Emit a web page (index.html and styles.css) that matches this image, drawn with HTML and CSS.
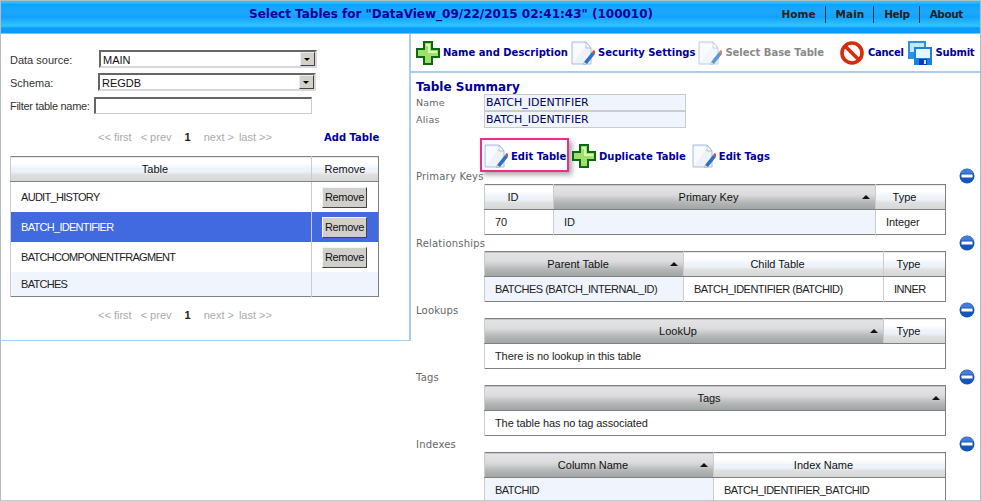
FILE: index.html
```html
<!DOCTYPE html>
<html lang="en">
<head>
  <meta charset="UTF-8" />
  <title>Select Tables</title>
  <link rel="stylesheet" href="styles.css">
</head>
<body>
  <svg class="defs" width="0" height="0">
    <symbol id="ico-plus" viewBox="0 0 24 24">
      <path d="M8 1h8v7h7v8h-7v7H8v-7H1V8h7z" fill="#9fe06c" stroke="#0b6a10" stroke-width="2"/>
      <path d="M10 3h4v7h7v2H12V5h-2z" fill="#dcf7bc"/>
    </symbol>
    <symbol id="ico-page" viewBox="0 0 24 24">
      <path d="M1 1h14l5 6v16H1z" fill="#eef3fb" stroke="#a9bedd"/>
      <path d="M15 1v6h5z" fill="#fff" stroke="#a9bedd"/>
      <path d="M2 22L16 3v0L2 3z" fill="#fff" opacity=".6"/>
      <path d="M13 21l8-10 3 2-8 10-4 1z" fill="#2b73c8"/>
      <path d="M21 11l1.500-2 3 2-2 2z" fill="#e8452c"/>
      <path d="M13 21l3 2-4 1z" fill="#f3d9a8"/>
    </symbol>
    <symbol id="ico-cancel" viewBox="0 0 24 24">
      <circle cx="12" cy="12" r="10" fill="#fff" stroke="#d92a0c" stroke-width="3.600"/>
      <path d="M5 5l14 14" stroke="#d92a0c" stroke-width="3.600"/>
    </symbol>
    <symbol id="ico-save" viewBox="0 0 24 24">
      <path d="M0 0h18v18H0z" fill="#2f8fe0"/>
      <path d="M2 2h14v9H2z" fill="#bfe8fb"/>
      <path d="M6 6h18v18H6z" fill="#1f7fdc"/>
      <path d="M8 8h14v9H8z" fill="#e4f6fd"/>
      <path d="M11 18h8v6h-8z" fill="#0b3fb5"/>
      <path d="M16 19h2v4h-2z" fill="#cfe9fb"/>
    </symbol>
    <symbol id="ico-minus" viewBox="0 0 16 16">
      <circle cx="8" cy="8" r="7.500" fill="#1556b8"/>
      <path d="M1.500 5.500a7 7 0 0 1 13 0z" fill="#5b8fe0" opacity=".7"/>
      <path d="M2.500 6.500h11v3h-11z" fill="#fff"/>
    </symbol>
  </svg>

  <div class="page">
    <header class="topbar">
      <div class="topbar-title">Select Tables for "DataView_09/22/2015 02:41:43" (100010)</div>
      <nav class="topnav">
        <a>Home</a>
        <a>Main</a>
        <a class="tight">Help</a>
        <a class="tight">About</a>
      </nav>
    </header>

    <div class="columns">
      <aside class="left">
        <div class="left-inner">
          <div class="field">
            <label class="field-label">Data source:</label>
            <div class="select select-source"><span>MAIN</span><i class="arrow"></i></div>
          </div>
          <div class="field field-next">
            <label class="field-label">Schema:</label>
            <div class="select select-schema"><span>REGDB</span><i class="arrow"></i></div>
          </div>
          <div class="field field-next">
            <label class="field-label-auto">Filter table name:</label>
            <div class="filter-input"></div>
          </div>
          <div class="pager-row">
            <div class="pager"><span>&lt;&lt; first</span><span>&lt; prev</span><b>1</b><span class="next">next &gt;</span><span>last &gt;&gt;</span></div>
            <a class="add-table">Add Table</a>
          </div>
          <table class="grid grid-left">
            <colgroup><col class="c-table"><col></colgroup>
            <tr><th class="light">Table</th><th class="light flush">Remove</th></tr>
            <tr class="tall"><td class="pad">AUDIT_HISTORY</td><td class="mid"><button class="btn">Remove</button></td></tr>
            <tr class="tall selected"><td class="pad">BATCH_IDENTIFIER</td><td class="mid"><button class="btn">Remove</button></td></tr>
            <tr class="tall"><td class="pad">BATCHCOMPONENTFRAGMENT</td><td class="mid"><button class="btn">Remove</button></td></tr>
            <tr class="alt"><td class="pad">BATCHES</td><td></td></tr>
          </table>
          <div class="pager pager-bottom"><span>&lt;&lt; first</span><span>&lt; prev</span><b>1</b><span class="next">next &gt;</span><span>last &gt;&gt;</span></div>
        </div>
      </aside>

      <main class="right">
        <div class="toolbar">
          <a class="tool t-name"><svg class="ico"><use href="#ico-plus"/></svg>Name and Description</a>
          <a class="tool t-sec"><svg class="ico"><use href="#ico-page"/></svg>Security Settings</a>
          <a class="tool t-base off"><svg class="ico"><use href="#ico-page"/></svg>Select Base Table</a>
          <a class="tool t-cancel"><svg class="ico"><use href="#ico-cancel"/></svg>Cancel</a>
          <a class="tool t-submit"><svg class="ico"><use href="#ico-save"/></svg>Submit</a>
        </div>
        <div class="summary">
          <h2 class="summary-title">Table Summary</h2>
          <div class="kv"><span class="kv-label">Name</span><span class="kv-value">BATCH_IDENTIFIER</span></div>
          <div class="kv"><span class="kv-label">Alias</span><span class="kv-value">BATCH_IDENTIFIER</span></div>
          <div class="actions">
            <a class="tool highlighted"><svg class="ico"><use href="#ico-page"/></svg>Edit Table</a>
            <a class="tool"><svg class="ico"><use href="#ico-plus"/></svg>Duplicate Table</a>
            <a class="tool t-tags"><svg class="ico"><use href="#ico-page"/></svg>Edit Tags</a>
          </div>

          <section class="block">
            <div class="block-head"><span>Primary Keys</span><svg class="minus"><use href="#ico-minus"/></svg></div>
            <table class="grid grid-right">
              <colgroup><col style="width:69px"><col><col style="width:70px"></colgroup>
              <tr><th class="light">ID</th><th class="dark sort">Primary Key</th><th class="light">Type</th></tr>
              <tr><td class="pad">70</td><td class="pad alt">ID</td><td class="pad">Integer</td></tr>
            </table>
          </section>

          <section class="block">
            <div class="block-head"><span>Relationships</span><svg class="minus"><use href="#ico-minus"/></svg></div>
            <table class="grid grid-right">
              <colgroup><col style="width:199px"><col style="width:200px"><col></colgroup>
              <tr><th class="dark sort">Parent Table</th><th class="light">Child Table</th><th class="light">Type</th></tr>
              <tr><td class="pad alt caps">BATCHES (BATCH_INTERNAL_ID)</td><td class="pad caps">BATCH_IDENTIFIER (BATCHID)</td><td class="pad caps">INNER</td></tr>
            </table>
          </section>

          <section class="block">
            <div class="block-head"><span>Lookups</span><svg class="minus"><use href="#ico-minus"/></svg></div>
            <table class="grid grid-right">
              <colgroup><col><col style="width:62px"></colgroup>
              <tr><th class="dark sort">LookUp</th><th class="light">Type</th></tr>
              <tr><td class="pad" colspan="2">There is no lookup in this table</td></tr>
            </table>
          </section>

          <section class="block">
            <div class="block-head"><span>Tags</span><svg class="minus"><use href="#ico-minus"/></svg></div>
            <table class="grid grid-right">
              <tr><th class="dark sort">Tags</th></tr>
              <tr><td class="pad">The table has no tag associated</td></tr>
            </table>
          </section>

          <section class="block">
            <div class="block-head"><span>Indexes</span><svg class="minus"><use href="#ico-minus"/></svg></div>
            <table class="grid grid-right">
              <colgroup><col style="width:229px"><col></colgroup>
              <tr><th class="dark sort">Column Name</th><th class="light">Index Name</th></tr>
              <tr><td class="pad alt caps">BATCHID</td><td class="pad caps">BATCH_IDENTIFIER_BATCHID</td></tr>
            </table>
          </section>
        </div>
      </main>
    </div>
  </div>
</body>
</html>
```

FILE: styles.css
```css
html, body {
  margin: 0;
  height: 100%;
  overflow: hidden;
}

body {
  background: #fff;
  font-family: "Liberation Sans", Arial, sans-serif;
  font-size: 11px;
  color: #222;
}

.defs {
  display: block;
  height: 0;
}

.page {
  height: 501px;
  box-sizing: border-box;
  border: 1px solid #b4bcc4;
  border-bottom-color: #c4c8cc;
  display: flex;
  flex-direction: column;
  overflow: hidden;
}

.topbar {
  height: 33px;
  flex: none;
  display: flex;
  align-items: center;
  background: linear-gradient(#30bdff 0, #30bdff 2px, #12a2fd 3px, #1ca8ff 11px, #12a2fd 16px, #22b2ff 20px, #33c4ff 25px, #0a9cfa 27px, #0a9cfa 100%);
  border-bottom: 1px solid #7fbfe8;
  padding-bottom: 6px;
  box-sizing: border-box;
}

.topbar-title {
  flex: 1;
  padding-left: 248px;
  font-family: "DejaVu Sans", sans-serif;
  font-weight: bold;
  font-size: 12px;
  color: #000099;
}

.topnav {
  display: flex;
  margin-right: 8px;
}

.topnav a {
  font-family: "DejaVu Sans", sans-serif;
  font-weight: bold;
  font-size: 10.500px;
  color: #222;
  padding: 1px 9px 1px 10px;
  line-height: 15px;
  border-left: 1px solid #333;
}

.topnav a:first-child {
  border-left: none;
}

.topnav .tight {
  letter-spacing: -.4px;
}

.columns {
  flex: 1;
  display: flex;
  min-height: 0;
}

.left {
  width: 410px;
  flex: none;
  height: 307px;
  box-sizing: border-box;
  border-right: 2px solid #a9cdee;
  border-bottom: 1px solid #a9cdee;
}

.left-inner {
  padding: 16px 0 0 9px;
}

.field {
  display: flex;
  align-items: center;
  height: 18px;
}

.field-next {
  margin-top: 5px;
}

.field-label {
  width: 89px;
  padding-top: 2px;
  color: #333;
}

.field-label-auto {
  width: 84px;
  padding-top: 2px;
  color: #333;
  letter-spacing: -.3px;
  white-space: nowrap;
}

.select {
  height: 18px;
  box-sizing: border-box;
  border: 2px solid;
  border-color: #666 #d8d8d8 #d8d8d8 #666;
  display: flex;
  align-items: center;
  justify-content: space-between;
  padding-left: 2px;
  font-size: 11px;
  color: #111;
}

.select span {
  padding-top: 2px;
}

.select-source {
  width: 218px;
}

.select-schema {
  width: 218px;
  margin-left: -1px;
}

.arrow {
  width: 15px;
  height: 14px;
  background: #d4d0c8;
  border: 1px solid;
  border-color: #eee #444 #444 #eee;
  box-sizing: border-box;
  position: relative;
}

.arrow::after {
  content: "";
  position: absolute;
  left: 3px;
  top: 5px;
  border: 3px solid transparent;
  border-top: 3px solid #000;
  border-bottom: none;
}

.filter-input {
  width: 218px;
  height: 17px;
  box-sizing: border-box;
  border: 1px solid #ccc;
  border-top: 2px solid #666;
  border-left: 2px solid #666;
}

.pager-row {
  display: flex;
  align-items: center;
  margin-top: 15px;
  height: 15px;
}

.pager {
  display: flex;
  color: #aaa;
  font-size: 11px;
  margin-left: 88px;
  width: 226px;
}

.pager span {
  margin-right: 9px;
}

.pager .next {
  margin-right: 5px;
}

.pager b {
  color: #222;
  margin: 0 13px 0 4px;
}

.add-table {
  font-family: "DejaVu Sans", sans-serif;
  font-weight: bold;
  font-size: 10px;
  color: #000099;
  margin-top: 2px;
}

.pager-bottom {
  margin-top: 12px;
}

.grid {
  border-collapse: collapse;
  table-layout: fixed;
  border: 1px solid #808080;
  box-sizing: border-box;
}

.grid th {
  font-weight: normal;
  color: #111;
  height: 24px;
  padding: 0 12px 0 0;
  border-left: 1px solid #ccc;
  border-bottom: 1px solid #808080;
}

.grid th.flush {
  padding-right: 0;
}

.grid td {
  height: 24px;
  padding: 0;
  border-left: 1px solid #ccc;
  color: #222;
}

.grid-left {
  width: 369px;
  margin-top: 12px;
}

.grid-left td {
  letter-spacing: -.7px;
}

.c-table {
  width: 301px;
}

.light {
  background: linear-gradient(#fff 0, #fff 6px, #eef3fb 11px, #eef3fb 14px, #e0e0e0 17px, #d4d6d6 100%);
}

.dark {
  background: linear-gradient(#e4e4e8 0, #dcdcde 9px, #b4b6b6 17px, #a0a4a4 100%);
}

.sort {
  position: relative;
}

.sort::after {
  content: "";
  position: absolute;
  right: 5px;
  top: 10px;
  border: 4px solid transparent;
  border-bottom: 4px solid #111;
  border-top: none;
}

.pad {
  padding-left: 10px !important;
}

.tall td {
  height: 30px;
}

.mid {
  text-align: center;
}

.selected td {
  background: #4169e0;
  color: #fff;
}

.alt,
.alt td {
  background: #f0f5fd;
}

.btn {
  width: 45px;
  height: 21px;
  padding: 0;
  margin-left: -1px;
  background: #d0cfcc;
  border: 1px solid;
  border-color: #f4f4f4 #444 #444 #f4f4f4;
  font-family: inherit;
  font-size: 11px;
  letter-spacing: -.3px;
  color: #111;
}

.right {
  flex: 1;
  min-width: 0;
}

.toolbar {
  height: 39px;
  box-sizing: border-box;
  display: flex;
  align-items: center;
  padding-left: 5px;
  border-bottom: 2px solid #a9cdee;
}

.tool {
  display: inline-flex;
  align-items: center;
  gap: 3px;
  font-family: "DejaVu Sans", sans-serif;
  font-weight: bold;
  font-size: 10px;
  color: #000099;
  white-space: nowrap;
}

.ico {
  width: 24px;
  height: 24px;
  flex: none;
}

.off {
  color: #888;
}

.off .ico {
  opacity: .75;
}

.t-sec { margin-left: 3px; }
.t-base { margin-left: 3px; }
.t-cancel { margin-left: 16px; gap: 4px; letter-spacing: -.3px; }
.t-submit { margin-left: 4px; gap: 4px; letter-spacing: -.2px; }

.summary {
  padding: 7px 0 0 5px;
}

.summary-title {
  margin: 0;
  font-family: "DejaVu Sans", sans-serif;
  font-weight: bold;
  font-size: 12px;
  line-height: 14px;
  color: #000099;
}

.kv {
  display: flex;
  align-items: center;
  height: 17px;
}

.kv-label {
  width: 68px;
  font-family: "DejaVu Sans", sans-serif;
  font-size: 9.500px;
  letter-spacing: .2px;
  color: #666;
}

.kv-value {
  width: 202px;
  height: 17px;
  box-sizing: border-box;
  border: 1px solid #ccc;
  background: #f0f5fd;
  padding-left: 1px;
  line-height: 15px;
  font-family: "DejaVu Sans", sans-serif;
  font-size: 11px;
  color: #000066;
}

.actions {
  display: flex;
  margin: 10px 0 0 64px;
  height: 34px;
  gap: 3px;
  align-items: flex-start;
}

.highlighted {
  border: 2px solid #ee2b8a;
  box-shadow: 3px 3px 5px #aaa;
  height: 34px;
  width: 89px;
  padding: 2px 0 0 2px;
  box-sizing: border-box;
}

.actions .tool:not(.highlighted) {
  margin-top: 6px;
}

.actions .t-tags {
  margin-left: 3px;
}

.block {
  height: 67px;
}

.block-head {
  display: flex;
  justify-content: space-between;
  align-items: center;
  height: 8px;
  padding-right: 5px;
  font-family: "DejaVu Sans", sans-serif;
  font-size: 10px;
  letter-spacing: .2px;
  color: #666;
}

.minus {
  width: 16px;
  height: 16px;
}

.grid-right {
  width: 462px;
  margin: 4px 0 0 68px;
}

.grid-right td {
  letter-spacing: -.1px;
}

.grid-right td.caps {
  letter-spacing: -.5px;
}
```
